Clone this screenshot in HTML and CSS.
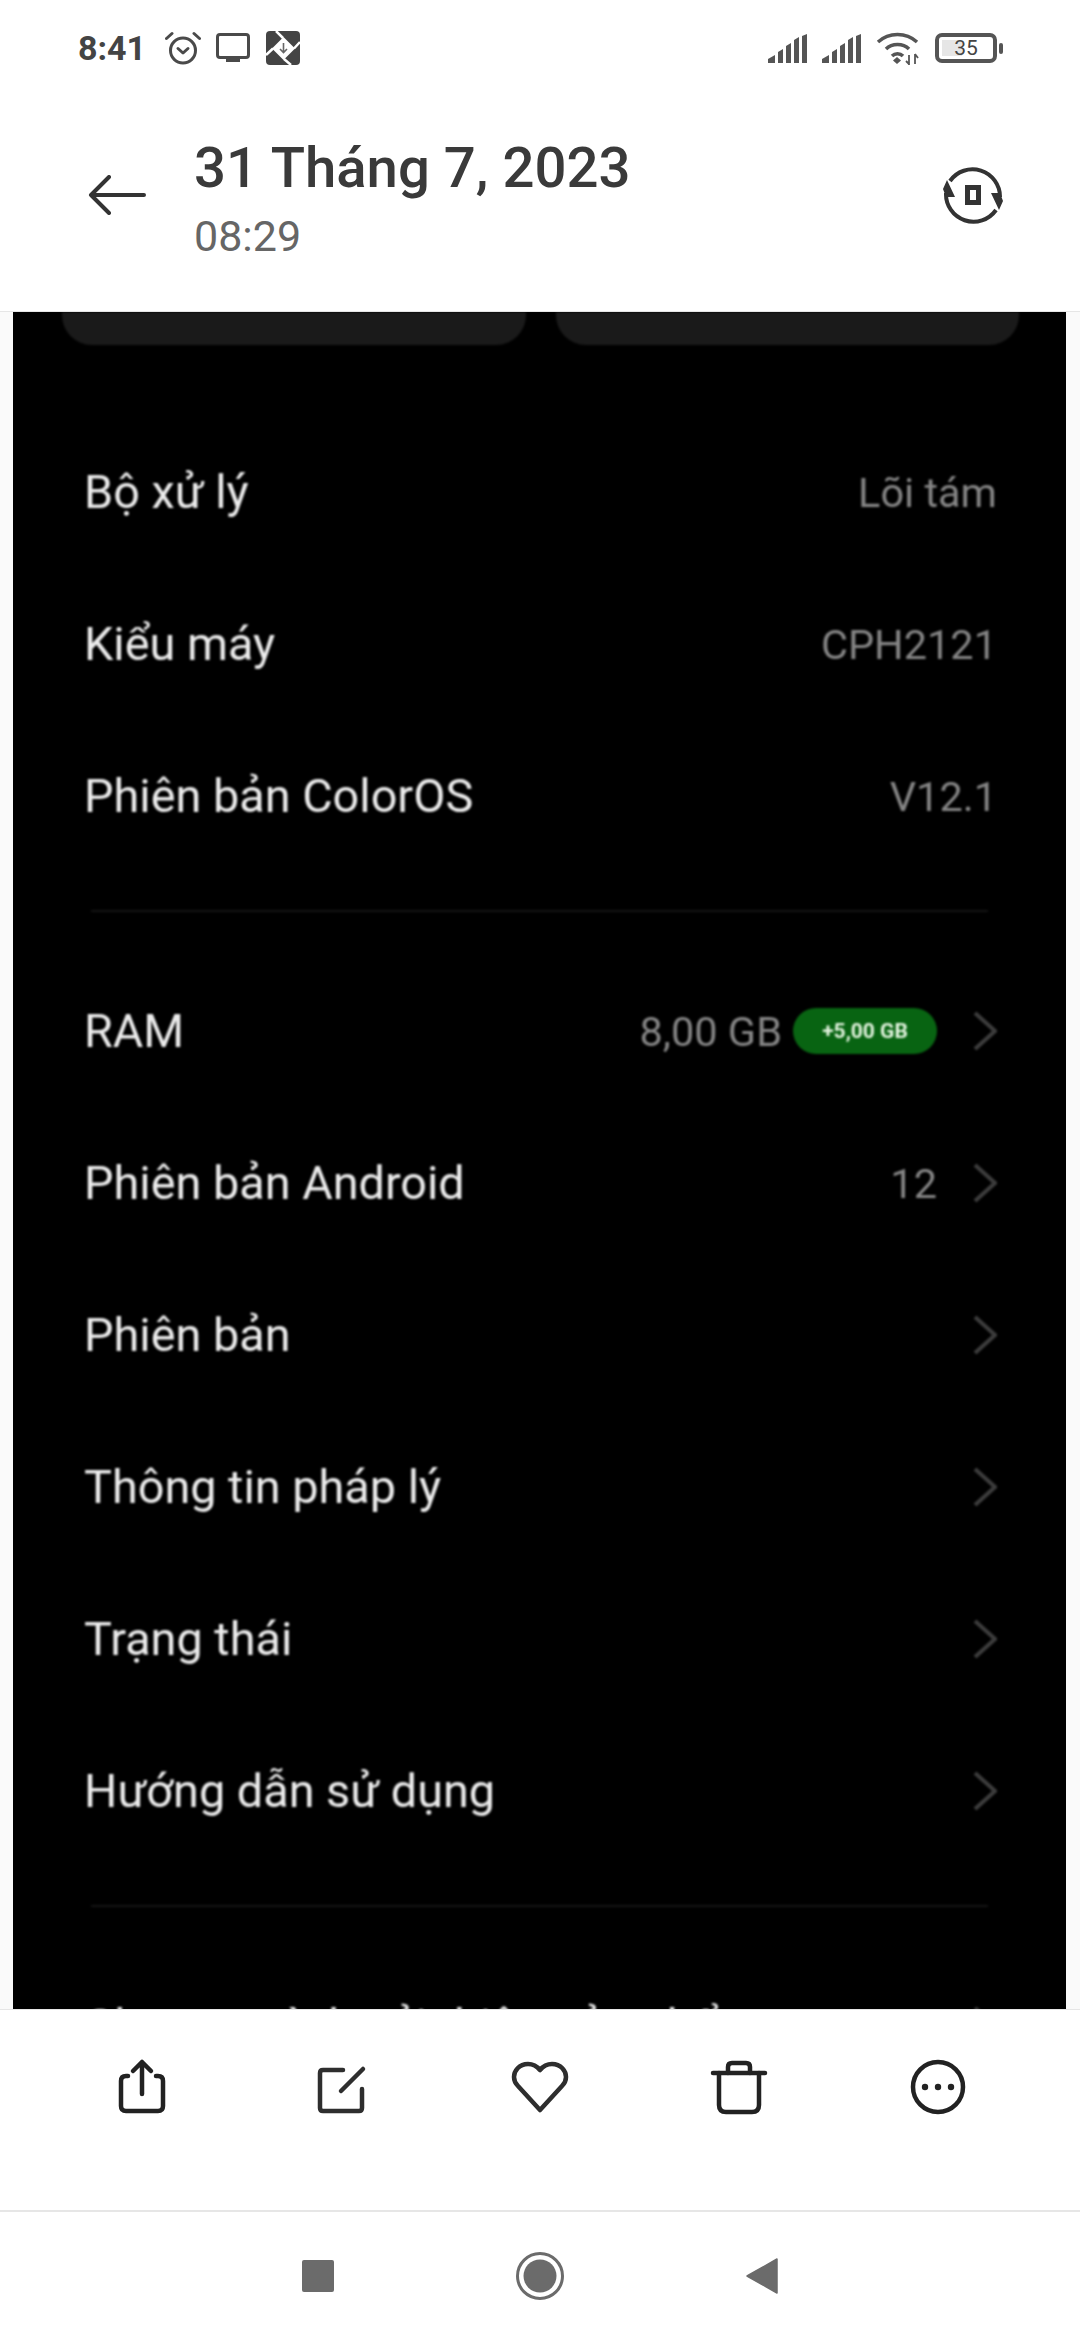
FILE: index.html
```html
<!DOCTYPE html>
<html lang="vi">
  <head>
    <meta charset="UTF-8" />
    <meta name="viewport" content="width=device-width, initial-scale=1.0" />
    <title>31 Tháng 7, 2023</title>
    <link rel="stylesheet" href="styles.css">
  </head>
  <body>
    <div class="status-bar">
      <div class="status-left">
        <span class="clock">8:41</span>
        <svg class="ic-alarm" viewBox="0 0 36 34" fill="none" stroke="#4a4a4a" stroke-width="3" stroke-linecap="round" stroke-linejoin="round">
          <circle cx="18" cy="19.5" r="12.5" />
          <path d="M1.5 7.5 7 2.5M34.500 7.500 29 2.500" />
          <path d="M13 17.500l5 4.500 5-4.500" />
        </svg>
        <svg class="ic-tv" viewBox="0 0 34 30" fill="none">
          <rect x="1.500" y="1.500" width="31" height="23" rx="2.500" stroke="#4a4a4a" stroke-width="3" />
          <rect x="10" y="25" width="14" height="4" fill="#4a4a4a" />
        </svg>
        <svg class="ic-dl" viewBox="0 0 34 34">
          <rect width="34" height="34" rx="4" fill="#444" />
          <path d="M17 7 10 0M28 17.500 34 11M18 28 25 34M7 17.500 0 24" stroke="#fff" stroke-width="2.500" fill="none" />
          <path d="M17.500 6 29 17.500 17.500 29 6 17.500Z" fill="#fff" />
          <path d="M17.500 12v9M14 18l3.500 3.500 3.500-3.500" stroke="#666" stroke-width="1.600" fill="none" />
        </svg>
      </div>
      <div class="status-right">
        <svg class="ic-signal" viewBox="0 0 40 29" fill="#555">
          <path d="M0 29V25L7 21V29ZM10 29V18L15 15V29ZM18 29V12L23 9V29ZM26 29V6L31 3V29ZM34 29V2L39 0V29Z" />
        </svg>
        <svg class="ic-signal" viewBox="0 0 40 29" fill="#555">
          <path d="M0 29V25L7 21V29ZM10 29V18L15 15V29ZM18 29V12L23 9V29ZM26 29V6L31 3V29ZM34 29V2L39 0V29Z" />
        </svg>
        <svg class="ic-wifi" viewBox="0 0 43 34" fill="none" stroke="#555" stroke-width="3.500">
          <path d="M2 11C13 1 30 1 41 11" />
          <path d="M10 18C16 12 27 12 33 18" />
          <path d="M16 25C19 22 24 22 27 25" />
          <path d="M17 29.500 21 26 25 29.500 21 33Z" fill="#555" stroke="none" />
          <path d="M33 24V34M30 30l3 3M39 23V33M39 23l3 4" stroke-width="1.800" />
        </svg>
        <div class="battery">
          <div class="battery-box">
            <div class="battery-fill"></div>
            <span class="battery-num">35</span>
          </div>
          <div class="battery-nub"></div>
        </div>
      </div>
    </div>

    <header class="top-bar">
      <svg class="ic-back" viewBox="0 0 58 40" fill="none" stroke="#333" stroke-width="4" stroke-linecap="round" stroke-linejoin="round">
        <path d="M21 2 3 20 21 38M3 20H56" />
      </svg>
      <div class="top-text">
        <h1 class="date">31 Tháng 7, 2023</h1>
        <p class="time">08:29</p>
      </div>
      <svg class="ic-rotate" viewBox="0 0 60 60" fill="none">
        <path d="M7 16A27.500 27.500 0 0 1 57 32M53 45A27.500 27.500 0 0 1 3 28" stroke="#333" stroke-width="4" />
        <path d="M0 24 4 15 12 32H3ZM60 36 56 45 48 28H57Z" fill="#333" />
        <rect x="24.500" y="22.500" width="11" height="15" stroke="#333" stroke-width="5" />
      </svg>
    </header>

    <main class="viewer">
      <div class="photo">
        <div class="photo-inner">
          <div class="cards">
            <div class="card"></div>
            <div class="card"></div>
          </div>

          <div class="row">
            <span class="row-label">Bộ xử lý</span>
            <span class="row-value">Lõi tám</span>
          </div>
          <div class="row">
            <span class="row-label">Kiểu máy</span>
            <span class="row-value">CPH2121</span>
          </div>
          <div class="row">
            <span class="row-label">Phiên bản ColorOS</span>
            <span class="row-value">V12.1</span>
          </div>

          <div class="divider"></div>

          <div class="row">
            <span class="row-label">RAM</span>
            <span class="row-value">8,00 GB</span>
            <span class="badge">+5,00 GB</span>
            <svg class="chevron" viewBox="0 0 24 40"><path d="M2 2 22 20 2 38" /></svg>
          </div>
          <div class="row">
            <span class="row-label">Phiên bản Android</span>
            <span class="row-value">12</span>
            <svg class="chevron" viewBox="0 0 24 40"><path d="M2 2 22 20 2 38" /></svg>
          </div>
          <div class="row">
            <span class="row-label">Phiên bản</span>
            <svg class="chevron" viewBox="0 0 24 40"><path d="M2 2 22 20 2 38" /></svg>
          </div>
          <div class="row">
            <span class="row-label">Thông tin pháp lý</span>
            <svg class="chevron" viewBox="0 0 24 40"><path d="M2 2 22 20 2 38" /></svg>
          </div>
          <div class="row">
            <span class="row-label">Trạng thái</span>
            <svg class="chevron" viewBox="0 0 24 40"><path d="M2 2 22 20 2 38" /></svg>
          </div>
          <div class="row">
            <span class="row-label">Hướng dẫn sử dụng</span>
            <svg class="chevron" viewBox="0 0 24 40"><path d="M2 2 22 20 2 38" /></svg>
          </div>

          <div class="divider"></div>

          <div class="row">
            <span class="row-label">Chương trình cải thiện sản phẩm</span>
            <svg class="chevron" viewBox="0 0 24 40"><path d="M2 2 22 20 2 38" /></svg>
          </div>
        </div>
      </div>
    </main>

    <div class="tool-bar">
      <button class="tool">
        <svg viewBox="0 0 60 60" fill="none" stroke="#222" stroke-width="4.500" stroke-linecap="round" stroke-linejoin="round">
          <path d="M16 18H14Q9 18 9 23V48Q9 53 14 53H46Q51 53 51 48V23Q51 18 46 18H44" />
          <path d="M30 36V4M21 13 30 4 39 13" />
        </svg>
      </button>
      <button class="tool">
        <svg viewBox="0 0 60 60" fill="none" stroke="#2e2e2e" stroke-width="4.500" stroke-linecap="round" stroke-linejoin="round">
          <path d="M32 12H12Q9 12 9 15V50Q9 53 12 53H48Q51 53 51 50V31" />
          <path d="M30 33 52 11" />
        </svg>
      </button>
      <button class="tool">
        <svg viewBox="0 0 60 60" fill="none" stroke="#2e2e2e" stroke-width="4.500" stroke-linejoin="round">
          <path d="M30 12C26 7 22 6 18 6 9 6 4 13 4 19 4 23 6 26 8 28L30 52 52 28C54 26 56 23 56 19 56 13 51 6 42 6 38 6 34 7 30 12Z" />
        </svg>
      </button>
      <button class="tool">
        <svg viewBox="0 0 60 60" fill="none" stroke="#222" stroke-width="4.500" stroke-linecap="round" stroke-linejoin="round">
          <path d="M4 15H56" />
          <path d="M19 15V9Q19 5 23 5H37Q41 5 41 9V15" />
          <path d="M10 15V47Q10 54 17 54H43Q50 54 50 47V15" />
        </svg>
      </button>
      <button class="tool">
        <svg viewBox="0 0 60 60" fill="none">
          <circle cx="30" cy="29" r="25" stroke="#222" stroke-width="4.500" />
          <circle cx="17" cy="29" r="3.200" fill="#222" />
          <circle cx="30" cy="29" r="3.200" fill="#222" />
          <circle cx="43" cy="29" r="3.200" fill="#222" />
        </svg>
      </button>
    </div>

    <nav class="nav-bar">
      <div class="nav-square"></div>
      <svg class="nav-home" viewBox="0 0 48 48">
        <circle cx="24" cy="24" r="22.500" fill="none" stroke="#6b6b6b" stroke-width="3" />
        <circle cx="24" cy="24" r="16.500" fill="#6b6b6b" />
      </svg>
      <svg class="nav-back" viewBox="0 0 32 36">
        <path d="M31 1V35L1 18Z" fill="#6b6b6b" stroke="#6b6b6b" stroke-width="1.500" stroke-linejoin="round" />
      </svg>
    </nav>
  </body>
</html>
```

FILE: styles.css
```css
* {
  box-sizing: border-box;
}

body {
  margin: 0;
  width: 1080px;
  height: 2340px;
  display: flex;
  flex-direction: column;
  overflow: hidden;
  background-color: #fff;
  font-family: Roboto, "Noto Sans", sans-serif;
}

/* Status bar */
.status-bar {
  height: 96px;
  flex: none;
  display: flex;
  justify-content: space-between;
  align-items: center;
  padding: 0 77px 0 78px;
}
.status-left,
.status-right {
  display: flex;
  align-items: center;
}
.clock {
  font-size: 34px;
  font-weight: 700;
  color: #444;
  margin-right: 19px;
}
.ic-alarm {
  width: 36px;
  height: 34px;
  margin-right: 15px;
}
.ic-tv {
  width: 34px;
  height: 30px;
  margin-right: 16px;
}
.ic-dl {
  width: 34px;
  height: 34px;
}
.ic-signal {
  width: 40px;
  height: 29px;
  margin-right: 14px;
}
.ic-wifi {
  width: 43px;
  height: 34px;
  margin-right: 16px;
}
.battery {
  display: flex;
  align-items: center;
  gap: 2px;
}
.battery-box {
  position: relative;
  width: 62px;
  height: 30px;
  border: 4px solid #555;
  border-radius: 7px;
  display: flex;
  align-items: center;
  justify-content: center;
}
.battery-fill {
  position: absolute;
  left: 3px;
  top: 3px;
  bottom: 3px;
  width: 20px;
  background-color: #e6e6e6;
}
.battery-num {
  position: relative;
  font-size: 21px;
  color: #444;
}
.battery-nub {
  width: 4px;
  height: 11px;
  border-radius: 2px;
  background-color: #555;
}

/* Title bar */
.top-bar {
  height: 216px;
  flex: none;
  display: flex;
  align-items: center;
  padding: 0 77px 18px 88px;
  border-bottom: 1px solid #e6e6e6;
}
.ic-back {
  width: 58px;
  height: 40px;
  margin-right: 48px;
}
.top-text {
  flex: 1;
  margin-top: 7px;
}
.date {
  margin: 0;
  font-size: 56.3px;
  font-weight: 500;
  line-height: 62px;
  color: #3a3a3a;
}
.time {
  margin: 13px 0 0;
  font-size: 43px;
  line-height: 48px;
  color: #666;
}
.ic-rotate {
  width: 60px;
  height: 60px;
}

/* Photo in the viewer */
.viewer {
  height: 1697px;
  flex: none;
  padding: 0 14px 0 13px;
  background-color: #fafafa;
}
.photo {
  height: 100%;
  overflow: hidden;
  background-color: #000;
}
.photo-inner {
  filter: blur(0.8px);
}
.cards {
  display: flex;
  gap: 30px;
  padding: 0 47px 0 49px;
  height: 104px;
}
.card {
  flex: 1;
  height: 33px;
  background-color: #1a1a1a;
  border-radius: 0 0 30px 30px;
}
.row {
  height: 152px;
  display: flex;
  align-items: center;
  padding: 0 69px 0 71px;
}
.row-label {
  flex: 1;
  font-size: 46.8px;
  color: #ececec;
}
.row-value {
  font-size: 41.5px;
  color: #858585;
}
.badge {
  width: 144px;
  height: 46px;
  margin-left: 11px;
  border-radius: 23px;
  background-color: #086412;
  color: #e4f5e0;
  font-size: 21px;
  font-weight: 700;
  line-height: 46px;
  text-align: center;
}
.chevron {
  width: 24px;
  height: 40px;
  margin-left: 36px;
  fill: none;
  stroke: #3c3c3c;
  stroke-width: 4;
}
.divider {
  height: 2px;
  margin: 38px 78px 43px;
  background-color: #141414;
}

/* Photo actions */
.tool-bar {
  height: 201px;
  flex: none;
  display: grid;
  grid-template-columns: repeat(5, 1fr);
  padding: 48px 43px 0 42px;
  border-top: 1px solid #e6e6e6;
}
.tool {
  height: 60px;
  padding: 0;
  border: none;
  background: none;
  display: flex;
  justify-content: center;
}
.tool svg {
  width: 60px;
  height: 60px;
}

/* Android nav */
.nav-bar {
  flex: 1;
  display: flex;
  align-items: center;
  justify-content: center;
  gap: 182px;
  border-top: 2px solid #e6e6e6;
}
.nav-square {
  width: 32px;
  height: 32px;
  border-radius: 2px;
  background-color: #6b6b6b;
}
.nav-home {
  width: 48px;
  height: 48px;
}
.nav-back {
  width: 32px;
  height: 36px;
}
```
